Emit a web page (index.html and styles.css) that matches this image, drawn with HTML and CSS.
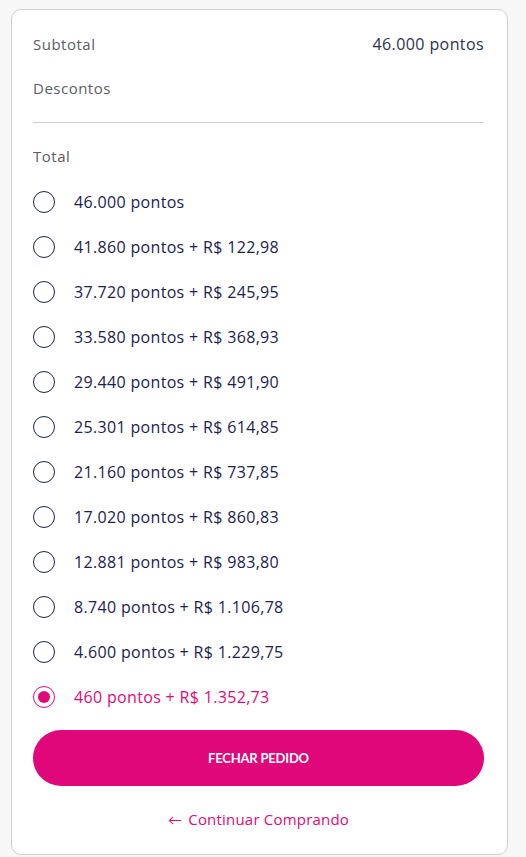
FILE: index.html
```html
<!DOCTYPE html>
<html lang="pt-BR">
<head>
<meta charset="utf-8">
<link rel="stylesheet" href="styles.css">
</head>
<body>
<div class="card">
  <div class="line-row">
    <span class="label">Subtotal</span>
    <span class="value">46.000 pontos</span>
  </div>
  <div class="line-row">
    <span class="label">Descontos</span>
  </div>
  <hr class="divider">
  <div class="line-row total">
    <span class="label">Total</span>
  </div>
  <div class="options">
    <label class="option"><span class="radio"></span><span>46.000 pontos</span></label>
    <label class="option"><span class="radio"></span><span>41.860 pontos + R$ 122,98</span></label>
    <label class="option"><span class="radio"></span><span>37.720 pontos + R$ 245,95</span></label>
    <label class="option"><span class="radio"></span><span>33.580 pontos + R$ 368,93</span></label>
    <label class="option"><span class="radio"></span><span>29.440 pontos + R$ 491,90</span></label>
    <label class="option"><span class="radio"></span><span>25.301 pontos + R$ 614,85</span></label>
    <label class="option"><span class="radio"></span><span>21.160 pontos + R$ 737,85</span></label>
    <label class="option"><span class="radio"></span><span>17.020 pontos + R$ 860,83</span></label>
    <label class="option"><span class="radio"></span><span>12.881 pontos + R$ 983,80</span></label>
    <label class="option"><span class="radio"></span><span>8.740 pontos + R$ 1.106,78</span></label>
    <label class="option"><span class="radio"></span><span>4.600 pontos + R$ 1.229,75</span></label>
    <label class="option selected"><span class="radio"></span><span>460 pontos + R$ 1.352,73</span></label>
  </div>
  <button class="checkout">FECHAR PEDIDO</button>
  <a class="continue" href="#"><span class="arrow">&#8592;</span> Continuar Comprando</a>
</div>
</body>
</html>
```

FILE: styles.css
```css
html, body {
  margin: 0;
  padding: 0;
  background: #f7f7f7;
}
body {
  font-family: "Open Sans", Lato, sans-serif;
  padding: 9px 0 0 11px;
}
.card {
  box-sizing: border-box;
  width: 497px;
  height: 846px;
  background: #fff;
  border: 1px solid #cfcfcf;
  border-radius: 10px;
  padding: 12px 23px 0 21px;
  display: flex;
  flex-direction: column;
}
.line-row {
  height: 44px;
  display: flex;
  align-items: center;
  justify-content: space-between;
  font-size: 15px;
}
.label {
  color: #5b5e63;
  letter-spacing: 0.5px;
}
.value {
  color: #2c3152;
  font-size: 16px;
  letter-spacing: 0.4px;
}
.divider {
  border: 0;
  border-top: 1px solid #cfcfcf;
  margin: 12px 0 11px;
  height: 0;
}
.options {
  display: flex;
  flex-direction: column;
  margin-top: 1px;
}
.option {
  height: 45px;
  display: flex;
  align-items: center;
  gap: 19px;
  font-size: 16px;
  font-weight: 500;
  color: #1c2250;
  letter-spacing: 0.33px;
}
.radio {
  box-sizing: border-box;
  width: 22px;
  height: 22px;
  border: 1.5px solid #1c2250;
  border-radius: 50%;
  flex: none;
  display: flex;
  align-items: center;
  justify-content: center;
}
.option.selected {
  color: #df0a7a;
}
.option.selected .radio {
  border-color: #df0a7a;
}
.option.selected .radio::after {
  content: "";
  width: 12px;
  height: 12px;
  border-radius: 50%;
  background: #df0a7a;
}
.checkout {
  margin-top: 11px;
  height: 56px;
  border: 0;
  border-radius: 28px;
  background: #e0077a;
  color: #fff;
  font-family: Lato, sans-serif;
  font-weight: 700;
  font-size: 13px;
  letter-spacing: -0.2px;
  cursor: pointer;
}
.continue {
  margin-top: 23px;
  align-self: center;
  text-decoration: none;
  color: #df0a7a;
  font-size: 15px;
  letter-spacing: 0.2px;
  height: 20px;
  line-height: 20px;
}
.arrow {
  font-size: 14px;
  margin-right: 2px;
}
```
